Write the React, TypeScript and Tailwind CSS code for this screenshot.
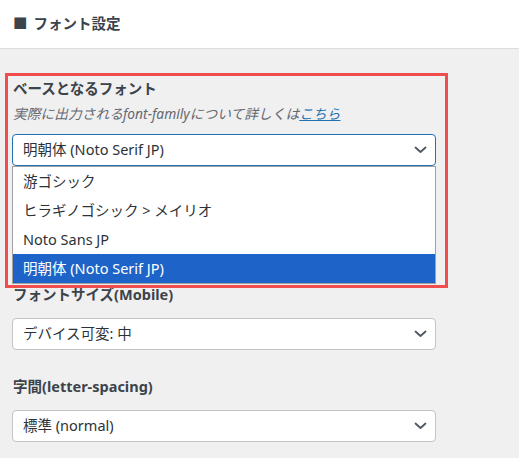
import React from "react";

const FONT = '"Noto Sans", "Noto Sans CJK JP", sans-serif';

function Chevron() {
  return (
    <svg width="13" height="8" viewBox="0 0 13 8" className="shrink-0">
      <path d="M1.5 1.5 L6.5 6 L11.5 1.5" fill="none" stroke="#50575e" strokeWidth="1.8" strokeLinecap="round" strokeLinejoin="round" />
    </svg>
  );
}

function Select({ value, focused }: { value: string; focused?: boolean }) {
  return (
    <div
      className={
        "h-[32px] w-[424px] rounded-[4px] bg-white border flex items-center justify-between pl-[10px] pr-[8px] text-[14.5px] text-[#2c3338] " +
        (focused ? "border-[#2271b1]" : "border-[#c3c4c7]")
      }
    >
      <span>{value}</span>
      <Chevron />
    </div>
  );
}

export default function App() {
  const options = ["游ゴシック", "ヒラギノゴシック > メイリオ", "Noto Sans JP", "明朝体 (Noto Serif JP)"];
  return (
    <div className="relative w-[519px] h-[458px] bg-[#f0f0f1] overflow-hidden" style={{ fontFamily: FONT }}>
      <div className="h-[49px] bg-white border-b border-[#dcdcde] flex items-center gap-[6px] pl-[13px] text-[14.5px] font-bold text-[#3c434a]">
        <span>■</span>
        <span>フォント設定</span>
      </div>
      <div className="pl-[12px] pt-[29px] flex flex-col">
        <div className="relative z-10">
          <div className="pl-[1px] text-[14.5px] leading-[20px] font-bold text-[#3c434a]">ベースとなるフォント</div>
          <div className="pl-[1px] mt-[6px] text-[13.75px] leading-[20px] italic text-[#646970]">
            実際に出力されるfont-familyについて詳しくは
            <span className="text-[#2271b1] underline">こちら</span>
          </div>
          <div className="mt-[10px]">
            <Select value="明朝体 (Noto Serif JP)" focused />
          </div>
          <div className="absolute left-0 top-full w-[424px] bg-white border border-[#a0a0a0] text-[14.5px] text-[#2c3338]">
            {options.map((o, i) => (
              <div
                key={o}
                className={
                  "h-[29px] flex items-center pl-[10px] " +
                  (i === options.length - 1 ? "bg-[#1e64c8] text-white" : "")
                }
              >
                {o}
              </div>
            ))}
          </div>
        </div>
        <div className="h-[92px] shrink-0" />
        <div className="mt-[26px] pl-[1px] text-[14.5px] leading-[20px] font-bold text-[#3c434a]">フォントサイズ(Mobile)</div>
        <div className="mt-[14px]">
          <Select value="デバイス可変: 中" />
        </div>
        <div className="mt-[26px] pl-[1px] text-[14.5px] leading-[20px] font-bold text-[#3c434a]">字間(letter-spacing)</div>
        <div className="mt-[14px]">
          <Select value="標準 (normal)" />
        </div>
      </div>
      <div className="absolute left-[5px] top-[73px] w-[443px] h-[215px] border-[3px] border-[#f04e4e] pointer-events-none z-20" />
    </div>
  );
}
